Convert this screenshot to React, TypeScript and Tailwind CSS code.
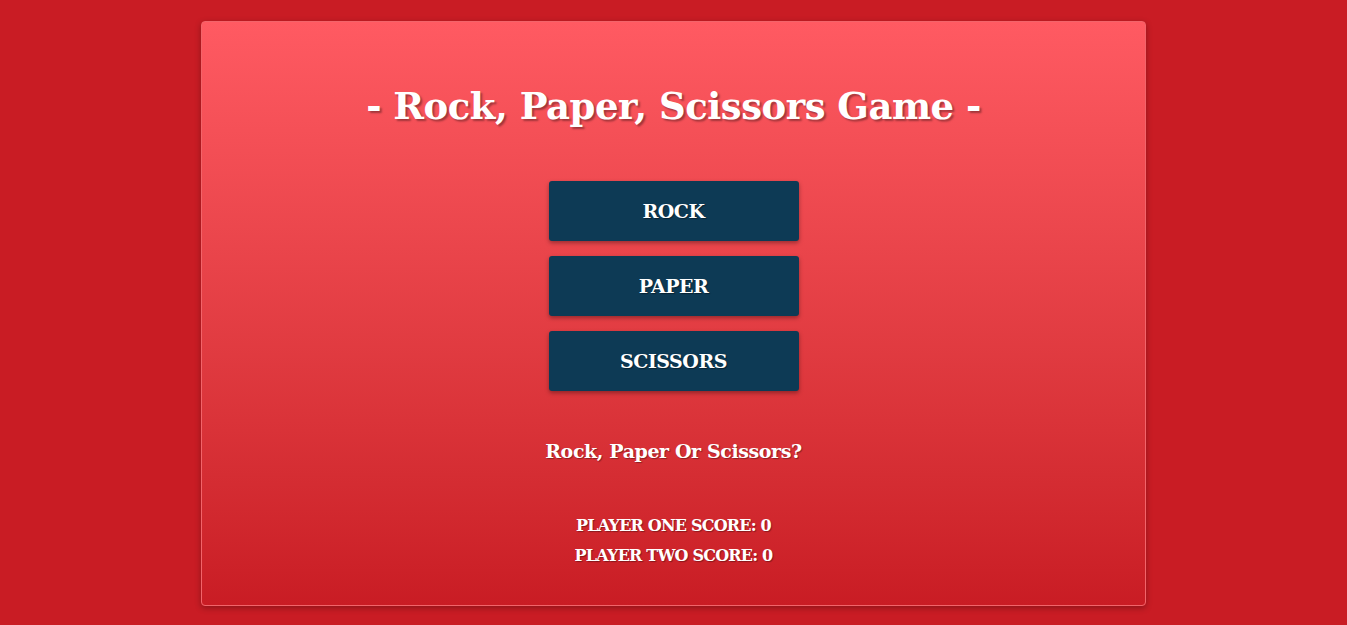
export default function App() {
  const choices = ["Rock", "Paper", "Scissors"]
  const font = { fontFamily: '"DejaVu Serif", "Liberation Serif", serif' }

  return (
    <div className="min-h-[625px] bg-[#c91c24] pt-[21px] pb-[19px]" style={font}>
      <div className="mx-auto w-[945px] h-[585px] rounded-[4px] border border-[#f2646a] bg-gradient-to-b from-[#ff5a62] to-[#c91c24] shadow-[0_2px_6px_rgba(0,0,0,0.3)] flex flex-col items-center text-white">
        <h1 className="mt-[60px] text-[37px] leading-[48px] font-bold tracking-[-0.5px] [text-shadow:2px_2px_2px_rgba(0,0,0,0.35)]">
          - Rock, Paper, Scissors Game -
        </h1>

        <div className="mt-[51px] flex flex-col gap-[15px]">
          {choices.map((c) => (
            <button
              key={c}
              className="w-[250px] h-[60px] rounded-[3px] bg-[#0d3a55] text-[19px] font-bold uppercase tracking-[-0.5px] text-white shadow-[0_2px_4px_rgba(0,0,0,0.35)] [text-shadow:1px_1px_1px_rgba(0,0,0,0.4)]"
            >
              {c}
            </button>
          ))}
        </div>

        <p className="mt-[48px] text-[19px] leading-[24px] font-bold tracking-[-0.4px] [text-shadow:1px_1px_1px_rgba(0,0,0,0.35)]">
          Rock, Paper Or Scissors?
        </p>

        <div className="mt-[51px] flex flex-col items-center gap-[6px] text-[16px] leading-[24px] font-bold uppercase tracking-[-0.8px] [text-shadow:1px_1px_1px_rgba(0,0,0,0.35)]">
          <p>Player One Score: 0</p>
          <p>Player Two Score: 0</p>
        </div>
      </div>
    </div>
  )
}
